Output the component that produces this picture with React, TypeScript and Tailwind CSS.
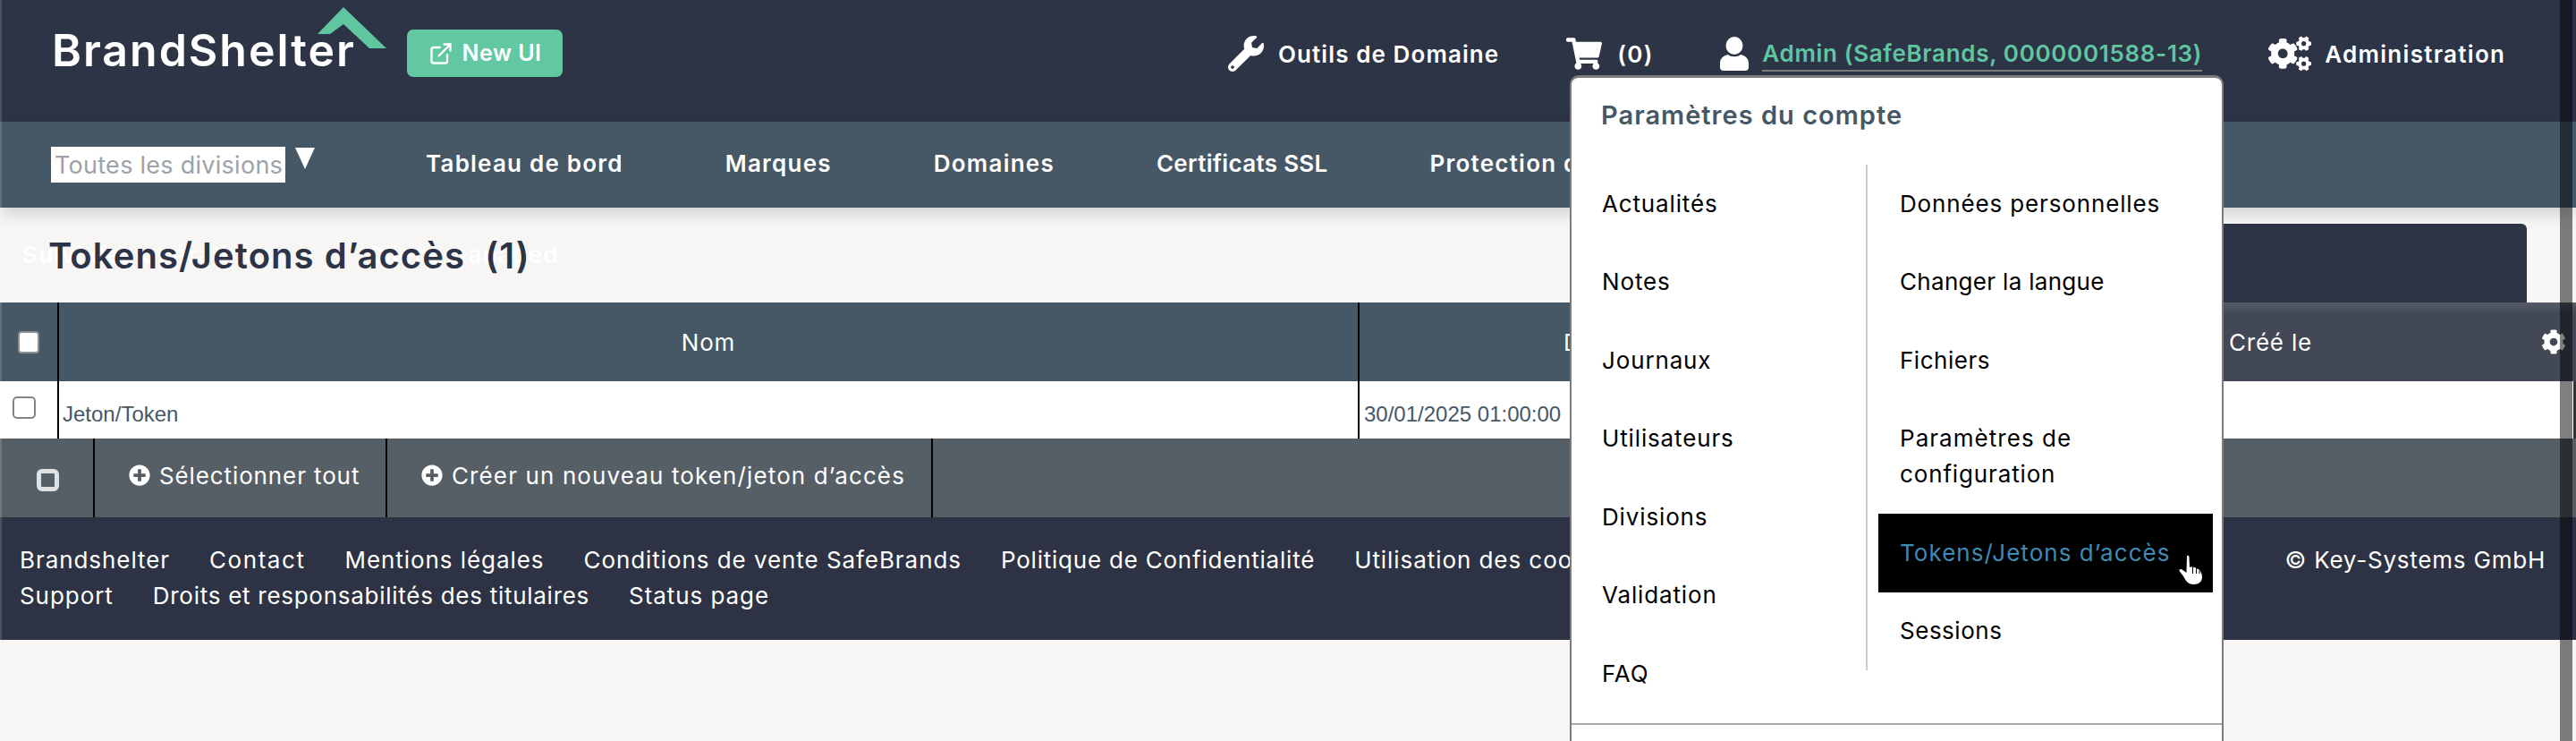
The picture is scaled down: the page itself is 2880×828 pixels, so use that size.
import React from "react";
import { FaWrench, FaShoppingCart, FaCogs, FaCog, FaPlusCircle } from "react-icons/fa";
import { FiExternalLink } from "react-icons/fi";

function UserIcon() {
  return (
    <svg viewBox="0 0 32 38" className="w-[32px] h-[38px]" fill="white">
      <ellipse cx="16" cy="10" rx="9.5" ry="10" />
      <path d="M9 20 C12 23 20 23 23 20 C28 21 32 24 32 30 L32 34 Q32 38 28 38 L4 38 Q0 38 0 34 L0 30 C0 24 4 21 9 20 Z" />
    </svg>
  );
}

function HandCursor() {
  return (
    <svg viewBox="0 0 27 33" className="w-[27px] h-[33px]">
      <path
        d="M9 1 Q11 0 11.5 2 L12 14 Q14 12.5 15.5 14 Q18 13 19.5 15.5 Q22 15 24 18 Q26.5 22 26 26 Q25 32.5 17 33 Q10 33 7.5 28 Q4 22 0.5 18 Q0 15.5 3 16 L8.5 20 Z"
        fill="white"
      />
      <path d="M15.5 14 V21 M19.5 15.5 V21 M23 17.5 V21" stroke="black" strokeWidth="1" fill="none" />
    </svg>
  );
}

const leftMenu = ["Actualités", "Notes", "Journaux", "Utilisateurs", "Divisions", "Validation", "FAQ"];

function MenuItem({ children, active }: { children: React.ReactNode; active?: boolean }) {
  return (
    <div
      className={
        active
          ? "relative py-[23.75px] pl-[24px] pr-[12px] leading-[40px] bg-black text-[#3f8ab5] tracking-[0.04em]"
          : "py-[23.75px] pl-[24px] pr-[12px] leading-[40px] text-black tracking-[0.033em]"
      }
    >
      {children}
      {active && (
        <span className="absolute left-[336px] top-[46px]">
          <HandCursor />
        </span>
      )}
    </div>
  );
}

export default function App() {
  return (
    <div className="relative h-[828px] w-full overflow-hidden bg-[#f7f6f4] font-['Inter',sans-serif]">
      {/* top header */}
      <header className="flex h-[136px] items-start bg-[#2d3446] text-white">
        <div className="relative ml-[58px] mt-[26px] text-[50px] font-semibold leading-[60px] tracking-[0.04em] whitespace-nowrap w-[397px]">
          BrandShelter
          <svg viewBox="0 0 77 46" className="absolute left-[297px] top-[-18px] w-[77px] h-[46px]">
            <path d="M29 0 L77 46 L58 46 L29 19 L14 30 L0 30 Z" fill="#5fc6a1" />
          </svg>
        </div>
        <div className="mt-[33px] flex h-[53px] w-[174px] items-center justify-center gap-[10px] rounded-[7px] bg-[#62c8a2] text-[25px] font-semibold tracking-[0.02em]">
          <FiExternalLink className="text-[28px]" />
          <span>New UI</span>
        </div>
        <div className="ml-[744px] mt-[40px] flex h-[40px] items-center text-[26px] font-semibold">
          <FaWrench className="text-[40px] mr-[16px]" />
          <span className="tracking-[0.042em] whitespace-nowrap">Outils de Domaine</span>
        </div>
        <div className="ml-[75px] mt-[40px] flex h-[40px] items-center text-[26px] font-semibold">
          <FaShoppingCart className="h-[40px] w-[40px] mr-[17px]" />
          <span className="w-[41px] tracking-[0.05em]">(0)</span>
        </div>
        <div className="ml-[74px] mt-[40px] flex h-[40px] items-center text-[26px] font-semibold">
          <span className="mr-[15px]"><UserIcon /></span>
          <span className="border-b-2 border-[#7b7b7b] leading-[37px] text-[#60c6a1] tracking-[0.026em] whitespace-nowrap">
            Admin (SafeBrands, 0000001588-13)
          </span>
        </div>
        <div className="ml-[74px] mt-[40px] flex h-[40px] items-center text-[26px] font-semibold">
          <FaCogs className="h-[42px] w-[48px] mr-[15px]" />
          <span className="tracking-[0.05em] whitespace-nowrap">Administration</span>
        </div>
      </header>

      {/* navigation */}
      <nav className="flex h-[96px] items-center bg-[#465766] pl-[57px] shadow-[0_6px_18px_rgba(0,0,0,0.16)] text-white relative">
        <div className="flex h-[40px] w-[262px] items-center bg-white pl-[4px] text-[27px] leading-none text-[#9ca3a8] tracking-[0.01em] whitespace-nowrap">
          Toutes les divisions
        </div>
        <svg viewBox="0 0 22 24" className="ml-[11px] mb-[14px] w-[22px] h-[24px]">
          <path d="M0 0 L22 0 L11 24 Z" fill="white" />
        </svg>
        <div className="ml-[124px] mb-[4px] flex gap-[114px] text-[26px] font-semibold tracking-[0.047em] whitespace-nowrap">
          <span>Tableau de bord</span>
          <span>Marques</span>
          <span>Domaines</span>
          <span className="tracking-[0.012em]">Certificats SSL</span>
          <span>Protection de marque</span>
        </div>
      </nav>

      {/* page title row */}
      <div className="relative flex h-[106px] items-end justify-between">
        <span className="absolute left-[25px] top-[33px] text-[26px] font-semibold text-white tracking-[0.05em] whitespace-nowrap">
          Suivi des opérations
        </span>
        <span className="absolute left-[410px] top-[33px] text-[26px] font-semibold text-white tracking-[0.05em] whitespace-nowrap">
          Client managed
        </span>
        <h1 className="relative mb-[26px] ml-[54px] text-[40px] font-semibold leading-[52px] text-[#2d3446] tracking-[0.027em] whitespace-pre">
          Tokens/Jetons d’accès  (1)
        </h1>
        <div className="mr-[55px] h-[88px] w-[800px] rounded-t-[6px] bg-[#2d3446]" />
      </div>

      {/* table */}
      <div className="flex h-[88px] items-center text-[26px] text-white">
        <div className="flex h-full w-[64px] shrink-0 items-center bg-[#465766] pl-[20px]">
          <span className="h-[25px] w-[24px] rounded-[4px] border-2 border-[#8a8f94] bg-white" />
        </div>
        <div className="flex h-full w-[1454px] shrink-0 items-center justify-center border-l-2 border-black bg-[#465766] tracking-[0.03em]">
          Nom
        </div>
        <div className="flex h-full w-[480px] shrink-0 items-center border-l-2 border-black bg-[#465766] pl-[228px]">
          Date
        </div>
        <div className="flex h-full flex-1 items-center justify-between bg-gradient-to-b from-[#565b67] from-0% to-[#424856] to-15% pl-[494px] pr-[11px]">
          <span className="tracking-[0.03em]">Créé le</span>
          <FaCog className="text-[28px]" />
        </div>
      </div>
      <div className="flex h-[64px] border-r-[3px] border-[#333] bg-white font-['Liberation_Sans',sans-serif] text-[24px] text-[#465766]">
        <div className="h-full w-[64px] shrink-0 pl-[14px] pt-[17px]">
          <span className="block h-[25px] w-[26px] rounded-[5px] border-2 border-[#7d858b] bg-white" />
        </div>
        <div className="h-full w-[1454px] shrink-0 border-l-2 border-black pl-[4px] pt-[23px] leading-[28px]">Jeton/Token</div>
        <div className="h-full flex-1 border-l-2 border-black pl-[5px] pt-[23px] leading-[28px]">30/01/2025 01:00:00</div>
      </div>
      <div className="flex h-[88px] bg-[#565e66] text-[26px] text-white">
        <div className="flex h-full w-[104px] shrink-0 items-center pl-[41px] pt-[4px]">
          <span className="h-[25px] w-[25px] rounded-[6px] border-[5px] border-[#dfe1e3] bg-[#565e66]" />
        </div>
        <div className="flex h-full w-[327px] shrink-0 items-center border-l-2 border-black pb-[6px] pl-[38px]">
          <FaPlusCircle className="mr-[10px] text-[24px]" />
          <span className="tracking-[0.034em] whitespace-nowrap">Sélectionner tout</span>
        </div>
        <div className="flex h-full w-[612px] shrink-0 items-center border-x-2 border-black pb-[6px] pl-[38px]">
          <FaPlusCircle className="mr-[10px] text-[24px]" />
          <span className="tracking-[0.043em] whitespace-nowrap">Créer un nouveau token/jeton d’accès</span>
        </div>
      </div>

      {/* footer */}
      <footer className="flex h-[137px] justify-between bg-[#2d3344] pl-[22px] pr-[34px] pt-[28px] text-[26px] leading-[40px] text-white">
        <div className="flex w-[2400px] flex-wrap content-start gap-x-[44px] tracking-[0.036em]">
          <span>Brandshelter</span>
          <span className="tracking-[0.06em]">Contact</span>
          <span>Mentions légales</span>
          <span>Conditions de vente SafeBrands</span>
          <span className="tracking-[0.03em]">Politique de Confidentialité</span>
          <span>Utilisation des cookies</span>
          <span className="basis-full h-0" />
          <span>Support</span>
          <span className="tracking-[0.028em]">Droits et responsabilités des titulaires</span>
          <span>Status page</span>
        </div>
        <span className="tracking-[0.03em] whitespace-nowrap">© Key-Systems GmbH</span>
      </footer>

      {/* account dropdown */}
      <div className="absolute left-[1755px] top-[84px] h-[780px] w-[731px] rounded-t-[10px] border-2 border-t-[3px] border-[#7b7b7b] bg-white text-[26px]">
        <div className="pl-[33px] pt-[22px] text-[29px] font-semibold leading-[40px] text-[#465766] tracking-[0.035em] whitespace-nowrap">
          Paramètres du compte
        </div>
        <div className="mt-[35px] flex items-start">
          <div className="w-[329px] shrink-0 pl-[10px]">
            {leftMenu.map((m) => (
              <MenuItem key={m}>{m}</MenuItem>
            ))}
          </div>
          <div className="w-[2px] h-[565px] bg-[#cccccc] shrink-0" />
          <div className="ml-[12px] w-[374px] shrink-0">
            <MenuItem>Données personnelles</MenuItem>
            <MenuItem><span className="tracking-[0.012em]">Changer la langue</span></MenuItem>
            <MenuItem><span className="tracking-[0.02em]">Fichiers</span></MenuItem>
            <MenuItem>
              <span className="tracking-[0.04em]">Paramètres de</span>
              <br />
              configuration
            </MenuItem>
            <MenuItem active>Tokens/Jetons d’accès</MenuItem>
            <MenuItem><span className="tracking-[0.02em]">Sessions</span></MenuItem>
          </div>
        </div>
        <div className="absolute left-0 right-0 top-[721px] h-[2px] bg-[#aaaaaa]" />
      </div>

      {/* window edge and overlay scrollbar */}
      <div className="absolute left-0 top-0 h-[715px] w-[2px] bg-white/15" />
      <div className="absolute bottom-0 left-[2862px] top-0 w-[14px] bg-black/50" />
    </div>
  );
}
